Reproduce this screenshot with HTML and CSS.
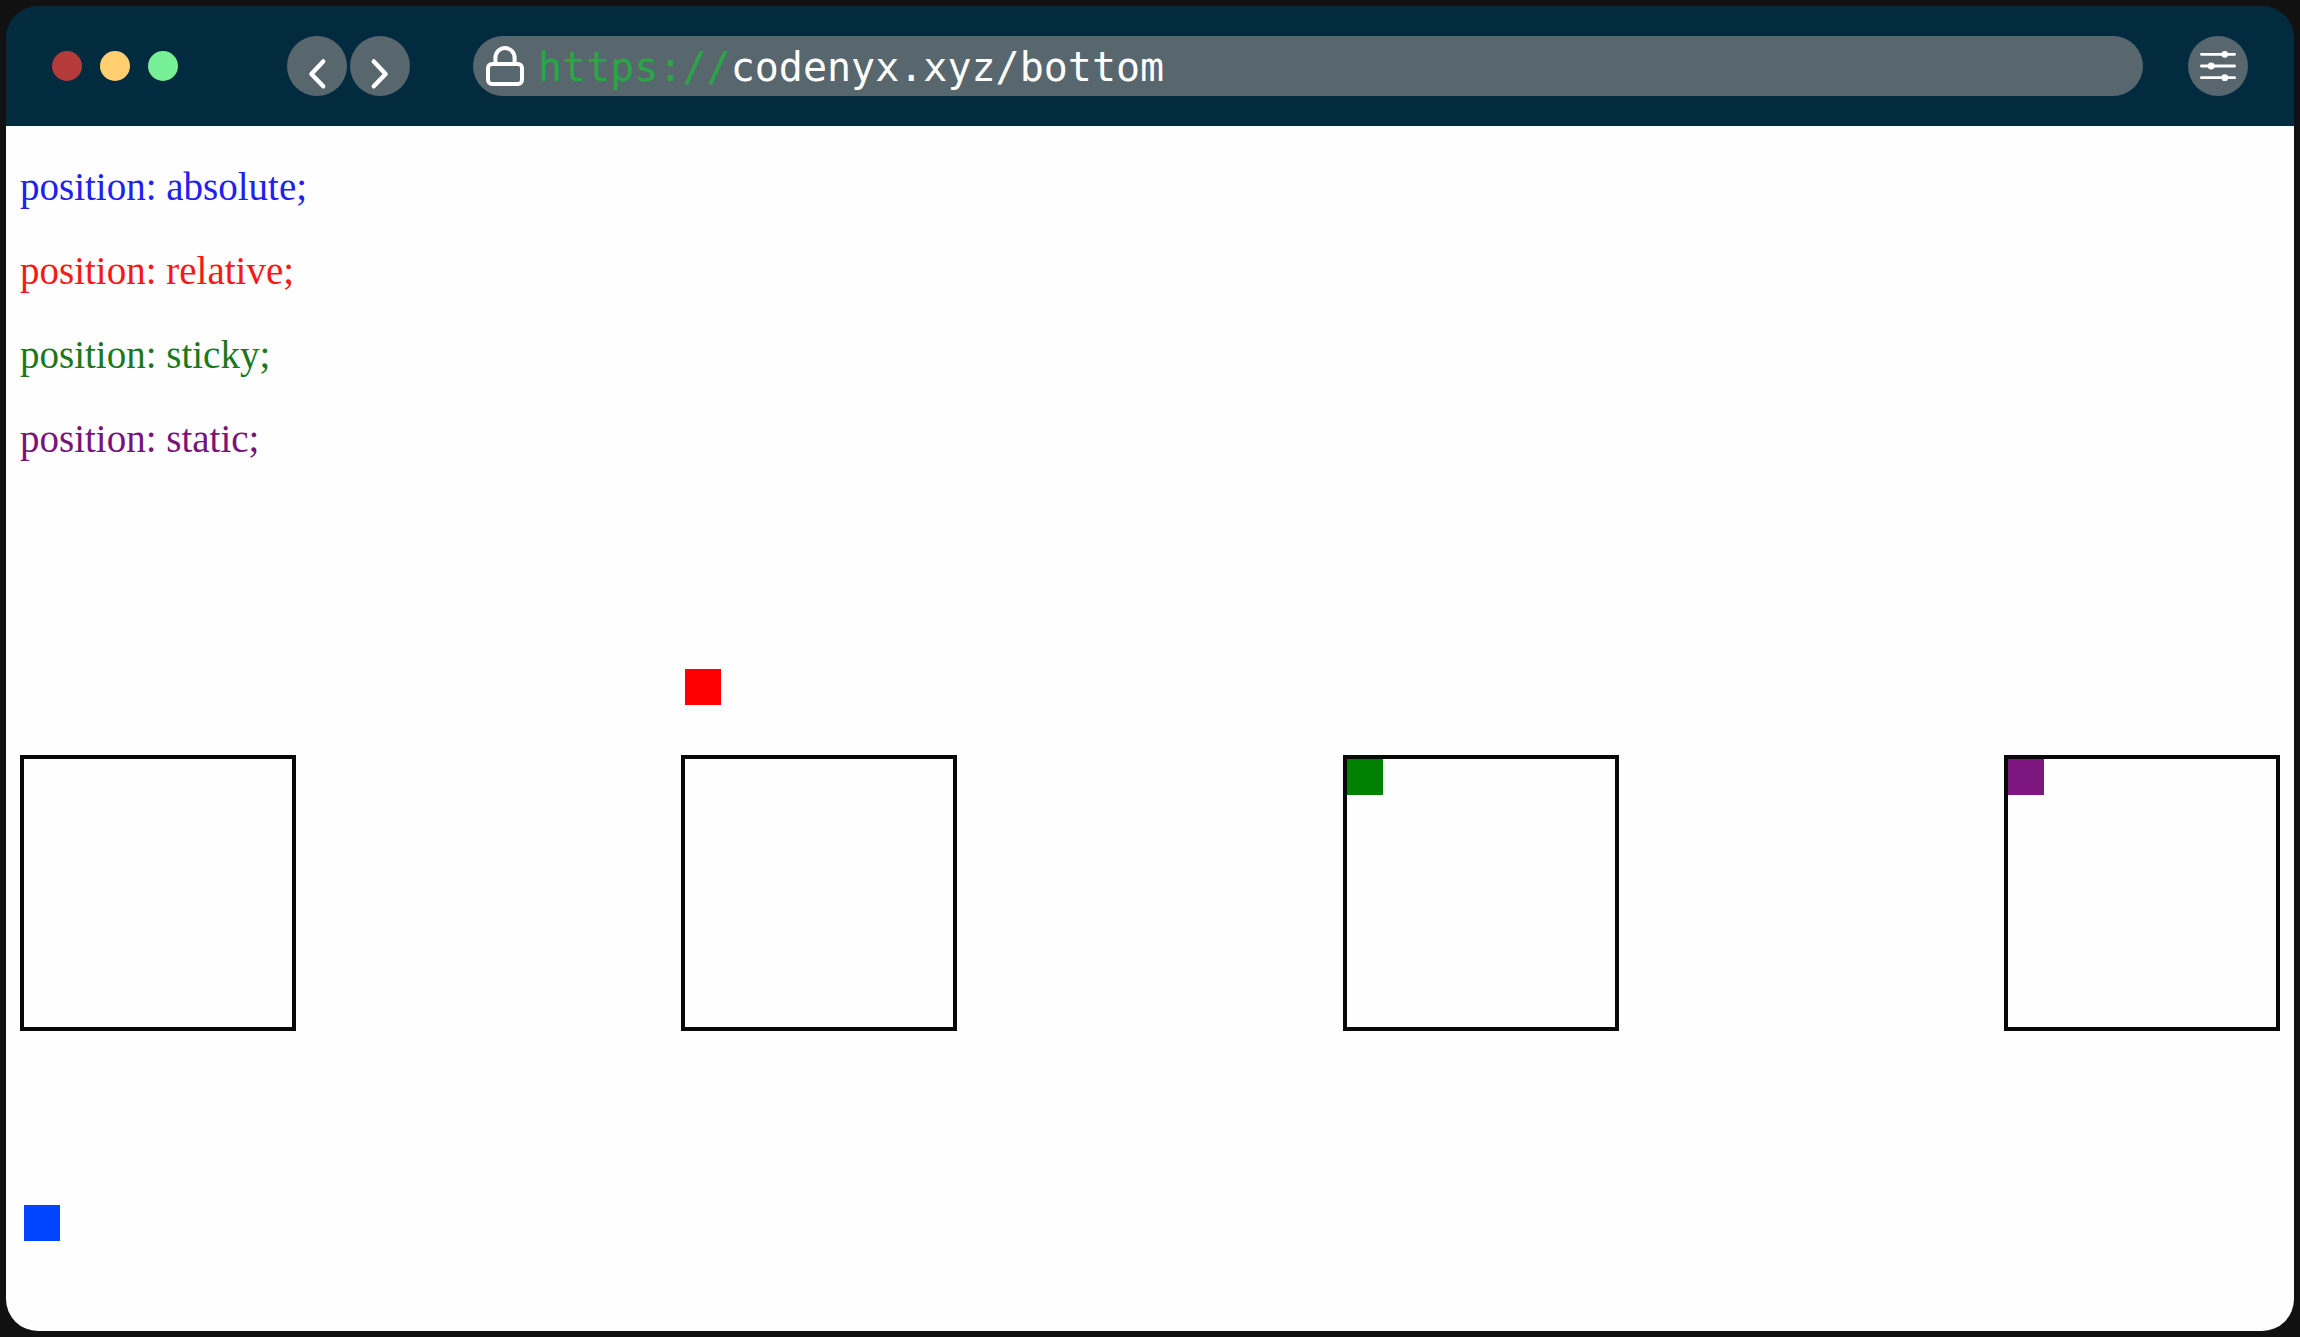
FILE: index.html
```html
<!DOCTYPE html>
<html lang="en">
<head>
  <meta charset="utf-8">
  <meta name="viewport" content="width=device-width, initial-scale=1">
  <title>codenyx.xyz/bottom</title>
  <link rel="stylesheet" href="styles.css">
</head>
<body>
  <div class="window">
    <header class="toolbar">
      <div class="lights">
        <span class="light light-close"></span>
        <span class="light light-minimize"></span>
        <span class="light light-zoom"></span>
      </div>
      <nav class="history">
        <button class="round-button" type="button" aria-label="Back">
          <svg class="icon" viewBox="0 0 60 60" aria-hidden="true"><path d="M36.2 25.4 24.4 38 36.2 50.3" stroke-width="4.4"/></svg>
        </button>
        <button class="round-button" type="button" aria-label="Forward">
          <svg class="icon" viewBox="0 0 60 60" aria-hidden="true"><path d="M23.8 25.4 35.6 38 23.8 50.3" stroke-width="4.4"/></svg>
        </button>
      </nav>
      <div class="address">
        <svg class="lock" viewBox="0 0 38 40" aria-hidden="true">
          <rect x="2" y="18" width="34" height="20" rx="4"/>
          <path d="M9.4 18V12a9.6 10 0 0 1 19.2 0v6"/>
        </svg>
        <label class="scheme" for="url">https://</label>
        <input class="url" id="url" type="text" value="codenyx.xyz/bottom" spellcheck="false">
      </div>
      <button class="round-button" type="button" aria-label="Settings">
        <svg class="icon" viewBox="0 0 60 60" aria-hidden="true">
          <path d="M13.4 18.3h33.2M13.4 30h33.2M13.4 41.7h33.2" stroke-width="2.8"/>
          <g class="knobs"><circle cx="36.8" cy="18.3" r="3.4"/><circle cx="23.2" cy="30" r="3.4"/><circle cx="36.8" cy="41.7" r="3.4"/></g>
        </svg>
      </button>
    </header>
    <main class="page">
      <div class="legend">
        <p class="line text-absolute">position: absolute;</p>
        <p class="line text-relative">position: relative;</p>
        <p class="line text-sticky">position: sticky;</p>
        <p class="line text-static">position: static;</p>
      </div>
      <div class="boxes">
        <div class="box"><div class="square square-absolute"></div></div>
        <div class="box"><div class="square square-relative"></div></div>
        <div class="box"><div class="square square-sticky"></div></div>
        <div class="box"><div class="square square-static"></div></div>
      </div>
    </main>
  </div>
</body>
</html>
```
FILE: styles.css
```css
* {
  box-sizing: border-box;
}

body {
  display: flex;
  min-height: 100vh;
  margin: 0;
  padding: 6px;
  background: #111;
}

.window {
  display: flex;
  flex: 1;
  flex-direction: column;
  min-width: 0;
  overflow: hidden;
  border-radius: 32px;
}

.toolbar {
  display: flex;
  align-items: center;
  height: 120px;
  padding: 0 46px;
  background: #022b40;
}

.lights {
  display: flex;
  gap: 18px;
}

.light {
  width: 30px;
  height: 30px;
  border-radius: 50%;
}

.light-close {
  background: #b53b3b;
}

.light-minimize {
  background: #ffcf70;
}

.light-zoom {
  background: #76ef95;
}

.history {
  display: flex;
  gap: 3px;
  margin: 0 63px 0 109px;
}

.round-button {
  flex: none;
  width: 60px;
  height: 60px;
  padding: 0;
  border: 0;
  border-radius: 50%;
  background: #58666e;
}

.icon,
.lock {
  display: block;
  fill: none;
  stroke: #fff;
  stroke-linecap: round;
  stroke-linejoin: round;
}

.knobs {
  fill: #fff;
  stroke: none;
}

.address {
  display: flex;
  flex: 1;
  align-items: center;
  min-width: 0;
  height: 60px;
  margin-right: 45px;
  padding: 0 30px 0 13px;
  border-radius: 30px;
  background: #58666e;
  font: 40px/58px "DejaVu Sans Mono", monospace;
}

.lock {
  flex: none;
  width: 38px;
  height: 40px;
  margin-right: 14px;
  stroke-width: 4;
}

.scheme,
.url {
  height: 60px;
  padding: 2px 0 0;
}

.scheme {
  color: #28a745;
}

.url {
  flex: 1;
  min-width: 0;
  border: 0;
  outline: 0;
  background: transparent;
  color: #fff;
  font: inherit;
}

.page {
  position: relative;
  flex: 1;
  padding: 39px 14px;
  background: #fefefe;
  font: 39px/44px "Liberation Serif", serif;
}

.line {
  margin: 0 0 40px;
}

.text-absolute {
  color: #2020f0;
}

.text-relative {
  color: #f81818;
}

.text-sticky {
  color: #1c781c;
}

.text-static {
  color: #781478;
}

.boxes {
  display: flex;
  justify-content: space-between;
  margin-top: 294px;
}

.box {
  width: 276px;
  height: 276px;
  border: 4px solid #080808;
}

.square {
  width: 36px;
  height: 36px;
}

.square-absolute {
  position: absolute;
  bottom: 90px;
  background: #0044ff;
}

.square-relative {
  position: relative;
  bottom: 90px;
  background: #ff0000;
}

.square-sticky {
  position: sticky;
  bottom: 90px;
  background: #008000;
}

.square-static {
  background: #7d167f;
}
```
